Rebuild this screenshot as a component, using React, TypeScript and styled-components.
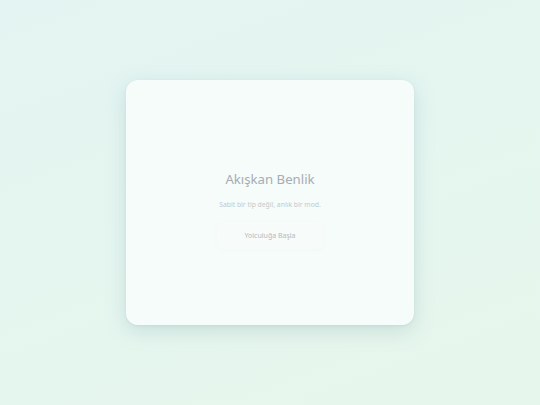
import React from "react";
import styled, { createGlobalStyle } from "styled-components";

const GlobalStyle = createGlobalStyle`
  html, body {
    margin: 0;
    padding: 0;
    height: 100%;
  }
  body {
    font-family: "Noto Sans", "Open Sans", sans-serif;
  }
  #root {
    height: 100%;
  }
`;

const Page = styled.div`
  width: 100%;
  height: 100vh;
  display: flex;
  align-items: center;
  justify-content: center;
  background: linear-gradient(160deg, #e3f4f2 0%, #e5f6f0 50%, #e7f6ec 100%);
`;

const Card = styled.div`
  width: 288px;
  height: 245px;
  box-sizing: border-box;
  padding-top: 14px;
  border-radius: 12px;
  background: #f5fcfa;
  box-shadow: 0 6px 20px rgba(120, 160, 165, 0.26), 0 1px 3px rgba(120, 160, 165, 0.14);
  display: flex;
  flex-direction: column;
  align-items: center;
  justify-content: center;
`;

const Title = styled.h1`
  margin: 0 0 10px;
  font-size: 13.2px;
  font-weight: 400;
  line-height: 19px;
  color: #a6acb4;
`;

const Subtitle = styled.p`
  margin: 0 0 12px;
  font-size: 6.8px;
  line-height: 11px;
  color: #c4c9cd;
`;

const StartButton = styled.button`
  width: 106px;
  height: 27px;
  border: none;
  border-radius: 6px;
  background: rgba(255, 255, 255, 0.22);
  box-shadow: 0 1px 4px rgba(140, 170, 175, 0.04);
  font-family: inherit;
  font-size: 7px;
  color: #b3b9bf;
  cursor: pointer;
`;

export default function App() {
  return (
    <>
      <GlobalStyle />
      <Page>
        <Card>
          <Title>Akışkan Benlik</Title>
          <Subtitle>Sabit bir tip değil, anlık bir mod.</Subtitle>
          <StartButton>Yolculuğa Başla</StartButton>
        </Card>
      </Page>
    </>
  );
}
